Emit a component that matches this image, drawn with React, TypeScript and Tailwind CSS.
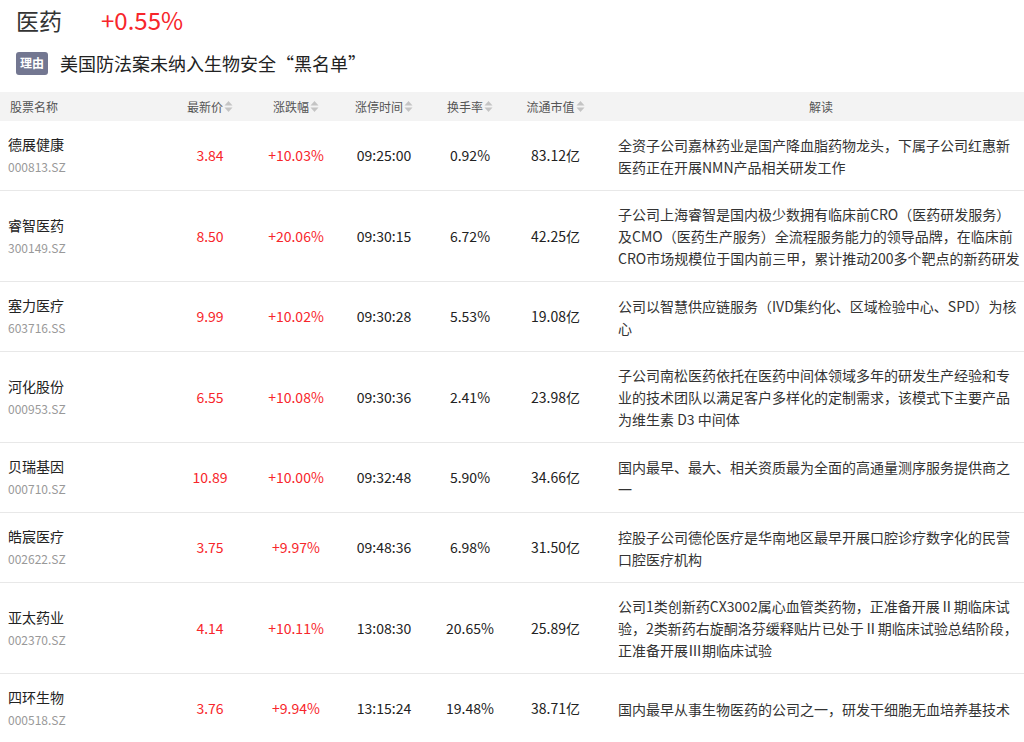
import React from "react";

type Row = {
  name: string;
  code: string;
  price: string;
  change: string;
  time: string;
  turnover: string;
  cap: string;
  desc: string[];
};

const rows: Row[] = [
  {
    name: "德展健康",
    code: "000813.SZ",
    price: "3.84",
    change: "+10.03%",
    time: "09:25:00",
    turnover: "0.92%",
    cap: "83.12亿",
    desc: ["全资子公司嘉林药业是国产降血脂药物龙头，下属子公司红惠新", "医药正在开展NMN产品相关研发工作"],
  },
  {
    name: "睿智医药",
    code: "300149.SZ",
    price: "8.50",
    change: "+20.06%",
    time: "09:30:15",
    turnover: "6.72%",
    cap: "42.25亿",
    desc: [
      "子公司上海睿智是国内极少数拥有临床前CRO（医药研发服务）",
      "及CMO（医药生产服务）全流程服务能力的领导品牌，在临床前",
      "CRO市场规模位于国内前三甲，累计推动200多个靶点的新药研发",
    ],
  },
  {
    name: "塞力医疗",
    code: "603716.SS",
    price: "9.99",
    change: "+10.02%",
    time: "09:30:28",
    turnover: "5.53%",
    cap: "19.08亿",
    desc: ["公司以智慧供应链服务（IVD集约化、区域检验中心、SPD）为核", "心"],
  },
  {
    name: "河化股份",
    code: "000953.SZ",
    price: "6.55",
    change: "+10.08%",
    time: "09:30:36",
    turnover: "2.41%",
    cap: "23.98亿",
    desc: [
      "子公司南松医药依托在医药中间体领域多年的研发生产经验和专",
      "业的技术团队以满足客户多样化的定制需求，该模式下主要产品",
      "为维生素 D3 中间体",
    ],
  },
  {
    name: "贝瑞基因",
    code: "000710.SZ",
    price: "10.89",
    change: "+10.00%",
    time: "09:32:48",
    turnover: "5.90%",
    cap: "34.66亿",
    desc: ["国内最早、最大、相关资质最为全面的高通量测序服务提供商之", "一"],
  },
  {
    name: "皓宸医疗",
    code: "002622.SZ",
    price: "3.75",
    change: "+9.97%",
    time: "09:48:36",
    turnover: "6.98%",
    cap: "31.50亿",
    desc: ["控股子公司德伦医疗是华南地区最早开展口腔诊疗数字化的民营", "口腔医疗机构"],
  },
  {
    name: "亚太药业",
    code: "002370.SZ",
    price: "4.14",
    change: "+10.11%",
    time: "13:08:30",
    turnover: "20.65%",
    cap: "25.89亿",
    desc: [
      "公司1类创新药CX3002属心血管类药物，正准备开展Ⅱ期临床试",
      "验，2类新药右旋酮洛芬缓释贴片已处于Ⅱ期临床试验总结阶段，",
      "正准备开展Ⅲ期临床试验",
    ],
  },
  {
    name: "四环生物",
    code: "000518.SZ",
    price: "3.76",
    change: "+9.94%",
    time: "13:15:24",
    turnover: "19.48%",
    cap: "38.71亿",
    desc: ["国内最早从事生物医药的公司之一，研发干细胞无血培养基技术"],
  },
];

const grid = "grid grid-cols-[165px_90px_82px_94px_78px_93px_1fr]";

function SortIcon() {
  return (
    <svg width="9" height="13" viewBox="0 0 9 13" className="ml-[1px]">
      <path d="M4.5 1 L8.5 5.5 L0.5 5.5 Z" fill="#c4c4c4" />
      <path d="M4.5 12 L8.5 7.5 L0.5 7.5 Z" fill="#c4c4c4" />
    </svg>
  );
}

function HeadCell({ label }: { label: string }) {
  return (
    <div className="flex items-center justify-center">
      <span>{label}</span>
      <SortIcon />
    </div>
  );
}

export default function App() {
  return (
    <div
      className="w-[1024px] h-[742px] overflow-hidden bg-white text-[#333]"
      style={{ fontFamily: '"Noto Sans CJK SC", "Noto Sans", sans-serif' }}
    >
      <div className="px-4 pt-[6px]">
        <div className="flex items-center h-[28px]">
          <span className="text-[23px] leading-[28px] text-[#333]">医药</span>
          <span className="ml-[39px] text-[24px] leading-[28px] text-[#f7262b]">+0.55%</span>
        </div>
        <div className="mt-[17px] flex items-center h-[24px]">
          <span className="inline-flex items-center justify-center w-[32px] h-[23px] rounded-[3px] bg-[#737791] text-white text-[12px] font-bold leading-none">
            理由
          </span>
          <span className="ml-[12px] text-[18px] leading-[24px] text-[#222]">美国防法案未纳入生物安全“黑名单”</span>
        </div>
      </div>

      <div className={`${grid} mt-[17px] h-[29px] items-center bg-[#f3f3f3] text-[12px] text-[#555]`}>
        <div className="pl-[10px]">股票名称</div>
        <HeadCell label="最新价" />
        <HeadCell label="涨跌幅" />
        <HeadCell label="涨停时间" />
        <HeadCell label="换手率" />
        <HeadCell label="流通市值" />
        <div className="text-center pl-[16px]">解读</div>
      </div>

      {rows.map((r) => (
        <div key={r.code} className={`${grid} items-center border-b border-[#e8e8e8] py-[12px] text-[14px]`}>
          <div className="pl-[8px] flex flex-col">
            <span className="leading-[23px] text-[#222]">{r.name}</span>
            <span className="leading-[22px] text-[12px] text-[#999]">{r.code}</span>
          </div>
          <div className="text-center text-[#f7262b]">{r.price}</div>
          <div className="text-center text-[#f7262b]">{r.change}</div>
          <div className="text-center text-[#222]">{r.time}</div>
          <div className="text-center text-[#222]">{r.turnover}</div>
          <div className="text-center text-[#222]">{r.cap}</div>
          <div className="pl-[16px] flex flex-col">
            {r.desc.map((line, i) => (
              <span key={i} className="leading-[22px] whitespace-nowrap text-[#333]">
                {line}
              </span>
            ))}
          </div>
        </div>
      ))}
    </div>
  );
}
